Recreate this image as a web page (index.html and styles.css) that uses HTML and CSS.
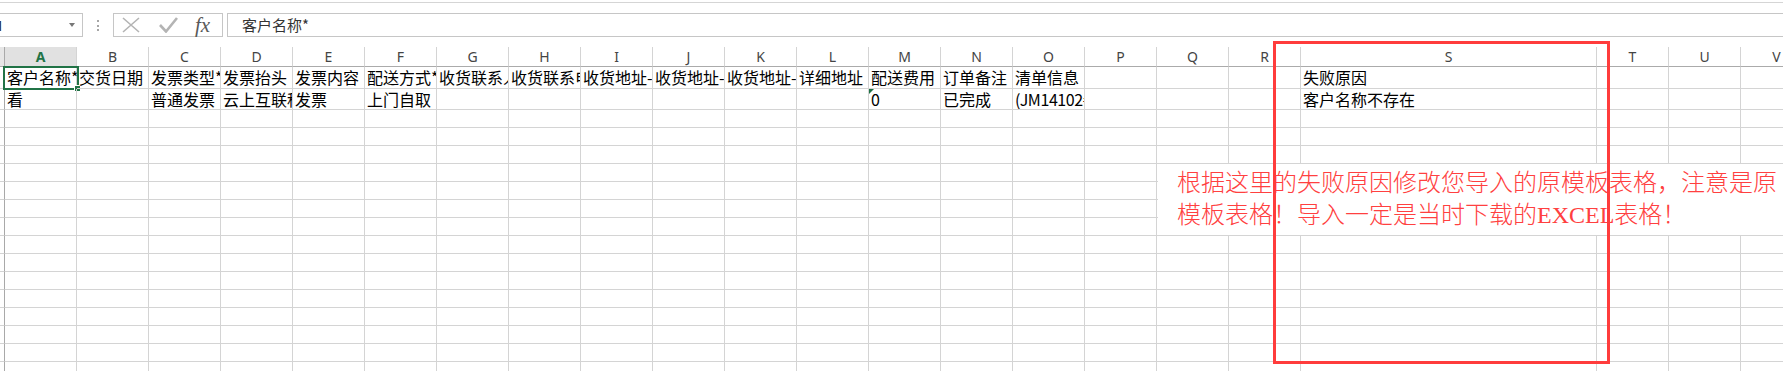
FILE: index.html
```html
<!DOCTYPE html>
<html lang="zh-CN">
<head>
  <meta charset="UTF-8" />
  <title>导入失败 - 失败原因</title>
  <link rel="stylesheet" href="styles.css">
</head>
<body>

  <div class="topline"></div>

  <!-- name box + formula bar -->
  <div class="formula-bar">
    <div class="namebox"><span class="name">A1</span><span class="drop"></span></div>
    <div class="dots"></div>
    <div class="fxbox">
      <svg class="ico-x" width="18" height="16" viewBox="0 0 18 16">
        <path d="M1 1 L17 15 M17 1 L1 15" stroke="#b4b4b4" stroke-width="1.6" fill="none"/>
      </svg>
      <svg class="ico-ok" width="19" height="16" viewBox="0 0 19 16">
        <path d="M1 8 L7 14.5 L18 1" stroke="#b4b4b4" stroke-width="2.6" fill="none"/>
      </svg>
      <span class="fx">fx</span>
    </div>
    <div class="formula">客户名称*</div>
  </div>

  <div class="sheet" id="sheet">
    <div class="row head">
      <div class="rh"></div>
      <div class="c sel">A</div><div class="c">B</div><div class="c">C</div><div class="c">D</div>
      <div class="c">E</div><div class="c">F</div><div class="c">G</div><div class="c">H</div>
      <div class="c">I</div><div class="c">J</div><div class="c">K</div><div class="c">L</div>
      <div class="c">M</div><div class="c">N</div><div class="c">O</div><div class="c">P</div>
      <div class="c">Q</div><div class="c">R</div><div class="c">S</div><div class="c">T</div>
      <div class="c">U</div><div class="c">V</div>
    </div>

    <div class="row r1">
      <div class="rh"></div>
      <div class="c active">客户名称*<span class="selbox"><span class="handle"></span></span></div>
      <div class="c">交货日期</div>
      <div class="c">发票类型*</div>
      <div class="c">发票抬头</div>
      <div class="c">发票内容</div>
      <div class="c">配送方式*</div>
      <div class="c">收货联系人*</div>
      <div class="c">收货联系电话*</div>
      <div class="c">收货地址-省*</div>
      <div class="c">收货地址-市*</div>
      <div class="c">收货地址-区*</div>
      <div class="c">详细地址</div>
      <div class="c">配送费用</div>
      <div class="c">订单备注</div>
      <div class="c">清单信息</div>
      <div class="c"></div><div class="c"></div><div class="c"></div>
      <div class="c">失败原因</div>
      <div class="c"></div><div class="c"></div><div class="c"></div>
    </div>

    <div class="row r2">
      <div class="rh"></div>
      <div class="c">看</div>
      <div class="c"></div>
      <div class="c">普通发票</div>
      <div class="c">云上互联科技</div>
      <div class="c">发票</div>
      <div class="c">上门自取</div>
      <div class="c"></div><div class="c"></div><div class="c"></div>
      <div class="c"></div><div class="c"></div><div class="c"></div>
      <div class="c num-text">0</div>
      <div class="c">已完成</div>
      <div class="c num">(JM14102#01)</div>
      <div class="c"></div><div class="c"></div><div class="c"></div>
      <div class="c">客户名称不存在</div>
      <div class="c"></div><div class="c"></div><div class="c"></div>
    </div>
  </div>

  <div class="note">根据这里的失败原因修改您导入的原模板表格，注意是原<br>模板表格！导入一定是当时下载的EXCEL表格！</div>
  <div class="redbox"></div>

  <script>
    // fill the rest of the sheet with empty rows
    const sheet = document.getElementById('sheet');
    for (let r = 0; r < 15; r++) {
      const row = document.createElement('div');
      row.className = 'row';
      row.innerHTML = '<div class="rh"></div>' + '<div class="c"></div>'.repeat(22);
      sheet.appendChild(row);
    }
  </script>

</body>
</html>
```

FILE: styles.css
```css
* {
  box-sizing: border-box;
  margin: 0;
  padding: 0;
}

body {
  width: 1783px;
  height: 371px;
  overflow: hidden;
  position: relative;
  background: #fff;
  font-family: "Noto Sans CJK SC", sans-serif;
  color: #000;
}

.topline {
  height: 3px;
  border-bottom: 1px solid #d5d5d5;
}

/* formula bar */
.formula-bar {
  display: flex;
  align-items: center;
  height: 24px;
  margin: 10px 0 10px;
}

.namebox {
  display: flex;
  align-items: center;
  width: 98px;
  height: 24px;
  margin-left: -15px;
  padding: 0 7px 0 0;
  border: 1px solid #c6c6c6;
  font: 15px "Noto Sans", sans-serif;
  color: #222;
}

.drop {
  margin-left: auto;
  width: 0;
  height: 0;
  border-left: 3px solid transparent;
  border-right: 3px solid transparent;
  border-top: 4px solid #777;
}

.dots {
  width: 2px;
  height: 11px;
  margin-left: 14px;
  border-left: 2px dotted #a6a6a6;
}

.fxbox {
  display: flex;
  align-items: center;
  width: 110px;
  height: 24px;
  margin-left: 14px;
  padding-left: 8px;
  border: 1px solid #c6c6c6;
}

.ico-ok {
  margin-left: 19px;
}

.fx {
  margin-left: 17px;
  font: italic 21px "Liberation Serif", serif;
  color: #595959;
  line-height: 22px;
}

.formula {
  flex: 1;
  height: 24px;
  margin-left: 4px;
  padding-left: 14px;
  border: 1px solid #c6c6c6;
  border-right: none;
  font-size: 15px;
  line-height: 22px;
  color: #333;
}

/* sheet grid */
.row {
  display: grid;
  grid-template-columns: 5px repeat(18, 72px) 296px repeat(3, 72px);
  height: 18px;
}

.rh {
  border-right: 1px solid #a9a9a9;
  border-bottom: 1px solid #d4d4d4;
}

.c {
  position: relative;
  overflow: hidden;
  white-space: nowrap;
  padding-left: 2px;
  border-right: 1px solid #d4d4d4;
  border-bottom: 1px solid #d4d4d4;
  font-size: 16px;
  line-height: 17px;
}

.c.num {
  letter-spacing: -0.4px;
}

.head {
  height: 20px;
}

.head .c {
  padding: 0;
  text-align: center;
  font: 14px "Noto Sans", sans-serif;
  line-height: 19px;
  color: #444;
  border-bottom-color: #ababab;
}

.head .rh {
  background: #e6e6e6;
  border-bottom-color: #ababab;
}

.head .sel {
  background: #e1e1e1;
  color: #217346;
  font-weight: bold;
}

.r1 {
  height: 22px;
}

.r1 .c {
  line-height: 21px;
}

.r2 {
  height: 21px;
}

.r2 .c {
  line-height: 20px;
}

/* selected cell A1 */
.r1 .c.active {
  overflow: visible;
}

.active .selbox {
  position: absolute;
  left: -2px;
  top: -1px;
  width: 76px;
  height: 24px;
  border: 2px solid #217346;
}

.active .handle {
  position: absolute;
  right: -4px;
  bottom: -4px;
  width: 7px;
  height: 7px;
  background: #217346;
  border: 1px solid #fff;
}

.num-text::before {
  content: "";
  position: absolute;
  left: 0;
  top: 0;
  border-top: 5px solid #1e7145;
  border-right: 5px solid transparent;
}

/* annotation over the sheet */
.note {
  position: absolute;
  left: 1158px;
  top: 164px;
  width: 625px;
  height: 71px;
  padding: 3px 0 0 19px;
  background: #fff;
  white-space: nowrap;
  font-family: "Liberation Serif", "Noto Sans CJK SC", serif;
  font-size: 24px;
  font-weight: 300;
  line-height: 32px;
  color: #ff4040;
}

.redbox {
  position: absolute;
  left: 1273px;
  top: 41px;
  width: 337px;
  height: 323px;
  border: 3px solid #ff3c3c;
}
```
